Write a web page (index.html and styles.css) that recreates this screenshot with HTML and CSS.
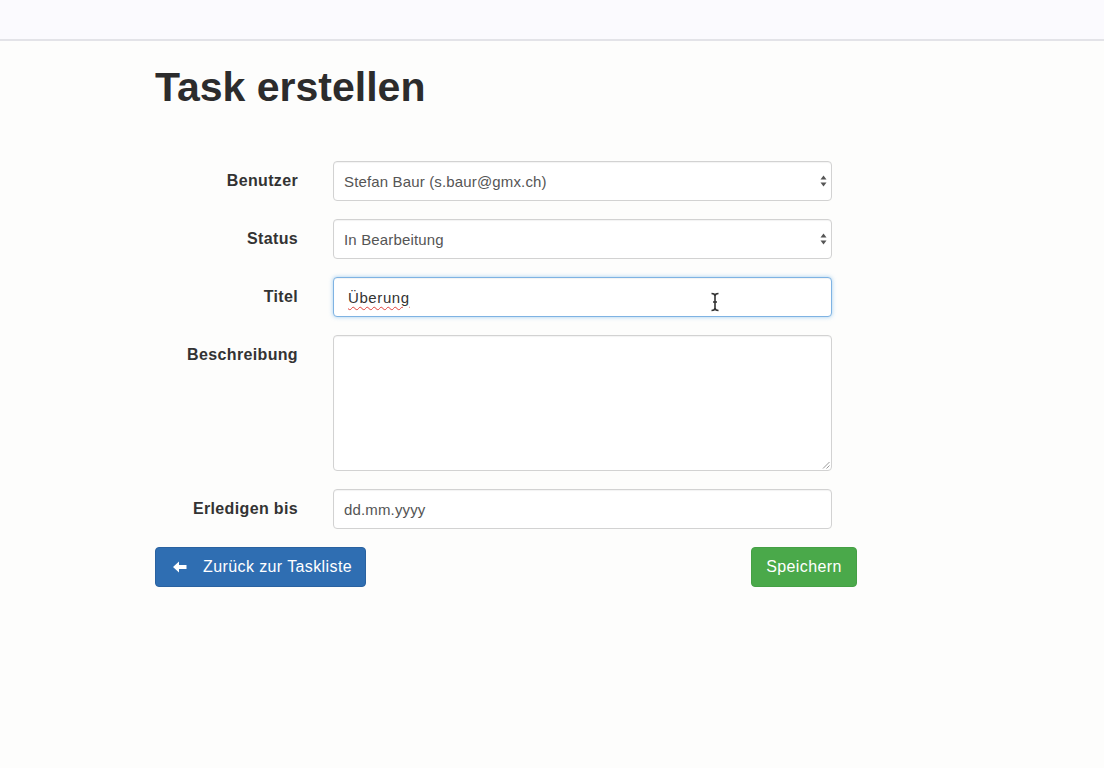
FILE: index.html
```html
<!DOCTYPE html>
<html lang="de">
<head>
<meta charset="utf-8">
<title>Task erstellen</title>
<link rel="stylesheet" href="styles.css">
</head>
<body>
<div class="navbar"></div>
<main class="container">
  <h1 class="title">Task erstellen</h1>
  <form class="form">
    <div class="row">
      <label class="label">Benutzer</label>
      <div class="control select">
        <span class="value">Stefan Baur (s.baur@gmx.ch)</span>
        <svg class="caret" width="7" height="12" viewBox="0 0 7 12"><path d="M3.5 0.5 L6.5 4.5 L0.5 4.5 Z M3.5 11.5 L6.5 7.5 L0.5 7.5 Z" fill="#555"/></svg>
      </div>
    </div>
    <div class="row">
      <label class="label">Status</label>
      <div class="control select">
        <span class="value">In Bearbeitung</span>
        <svg class="caret" width="7" height="12" viewBox="0 0 7 12"><path d="M3.5 0.5 L6.5 4.5 L0.5 4.5 Z M3.5 11.5 L6.5 7.5 L0.5 7.5 Z" fill="#555"/></svg>
      </div>
    </div>
    <div class="row">
      <label class="label">Titel</label>
      <div class="control focus">
        <span class="value typed"><span class="misspelled">Überung</span></span>
        <svg class="ibeam" width="10" height="20" viewBox="0 0 10 20"><path d="M1.5 1.5 Q5 1.5 5 4 L5 16 Q5 18.5 1.5 18.5 M8.5 1.5 Q5 1.5 5 4 M5 16 Q5 18.5 8.5 18.5 M3 10 L7 10" fill="none" stroke="#333" stroke-width="1.6"/></svg>
      </div>
    </div>
    <div class="row">
      <label class="label">Beschreibung</label>
      <div class="control textarea">
        <svg class="grip" width="8" height="8" viewBox="0 0 8 8"><path d="M7.5 1 L1 7.5 M7.5 4.5 L4.5 7.5" stroke="#999" stroke-width="1"/></svg>
      </div>
    </div>
    <div class="row">
      <label class="label">Erledigen bis</label>
      <div class="control">
        <span class="value">dd.mm.yyyy</span>
      </div>
    </div>
    <div class="actions">
      <button type="button" class="btn btn-primary">
        <svg class="arrow" width="14" height="12" viewBox="0 0 14 12"><path d="M0 6 L6 0.5 L6 4 L13.5 4 L13.5 8 L6 8 L6 11.5 Z" fill="#fff"/></svg>
        <span>Zurück zur Taskliste</span>
      </button>
      <button type="button" class="btn btn-success">Speichern</button>
    </div>
  </form>
</main>
</body>
</html>
```

FILE: styles.css
```css
html, body {
  margin: 0;
  padding: 0;
  background: #fdfdfc;
  font-family: "Liberation Sans", Arial, sans-serif;
  color: #333;
}

.navbar {
  height: 39px;
  background: #fbfafe;
  border-bottom: 2px solid #e3e3e8;
}

.container {
  width: 702px;
  margin: 0 0 0 155px;
}

.title {
  margin: 24px 0 0 0;
  font-size: 41px;
  line-height: 44px;
  font-weight: bold;
  color: #2c2c2c;
}

.form {
  margin-top: 52px;
  display: flex;
  flex-direction: column;
  gap: 18px;
}

.row {
  display: flex;
  align-items: flex-start;
  gap: 35px;
}

.label {
  width: 143px;
  flex: none;
  text-align: right;
  font-size: 16px;
  letter-spacing: 0.35px;
  font-weight: bold;
  line-height: 40px;
  color: #333;
}

.control {
  position: relative;
  box-sizing: border-box;
  width: 499px;
  height: 40px;
  border: 1px solid #d2d2d2;
  border-radius: 4px;
  background: #fff;
  display: flex;
  align-items: center;
  padding: 0 10px;
  box-shadow: inset 0 1px 1px rgba(0,0,0,0.05);
}

.value {
  font-size: 15px;
  color: #555;
  letter-spacing: 0.15px;
}

.typed {
  color: #333;
  margin-left: 4px;
  letter-spacing: 0.6px;
}

.misspelled {
  text-decoration: underline wavy #e0423c;
  text-decoration-thickness: 1px;
  text-underline-offset: 3px;
}

.select .caret {
  position: absolute;
  right: 4px;
  top: 13px;
}

.focus {
  border-color: #7fb3e3;
  box-shadow: inset 0 1px 1px rgba(0,0,0,0.05), 0 0 4px rgba(102,175,233,0.6);
}

.ibeam {
  position: absolute;
  left: 376px;
  top: 14px;
}

.textarea {
  height: 136px;
}

.grip {
  position: absolute;
  right: 1px;
  bottom: 1px;
}

.actions {
  display: flex;
  justify-content: space-between;
  align-items: center;
}

.btn {
  box-sizing: border-box;
  height: 40px;
  border-radius: 4px;
  border: 1px solid transparent;
  color: #fff;
  font-family: "Liberation Sans", Arial, sans-serif;
  font-size: 16px;
  letter-spacing: 0.4px;
  display: flex;
  align-items: center;
  cursor: pointer;
}

.btn-primary {
  width: 211px;
  background: #2f6eb2;
  border-color: #2a62a0;
  padding: 0 0 0 17px;
  gap: 16px;
}

.btn-success {
  width: 106px;
  background: #4aa94a;
  border-color: #45a045;
  justify-content: center;
  padding: 0;
}

.arrow {
  flex: none;
}
```
